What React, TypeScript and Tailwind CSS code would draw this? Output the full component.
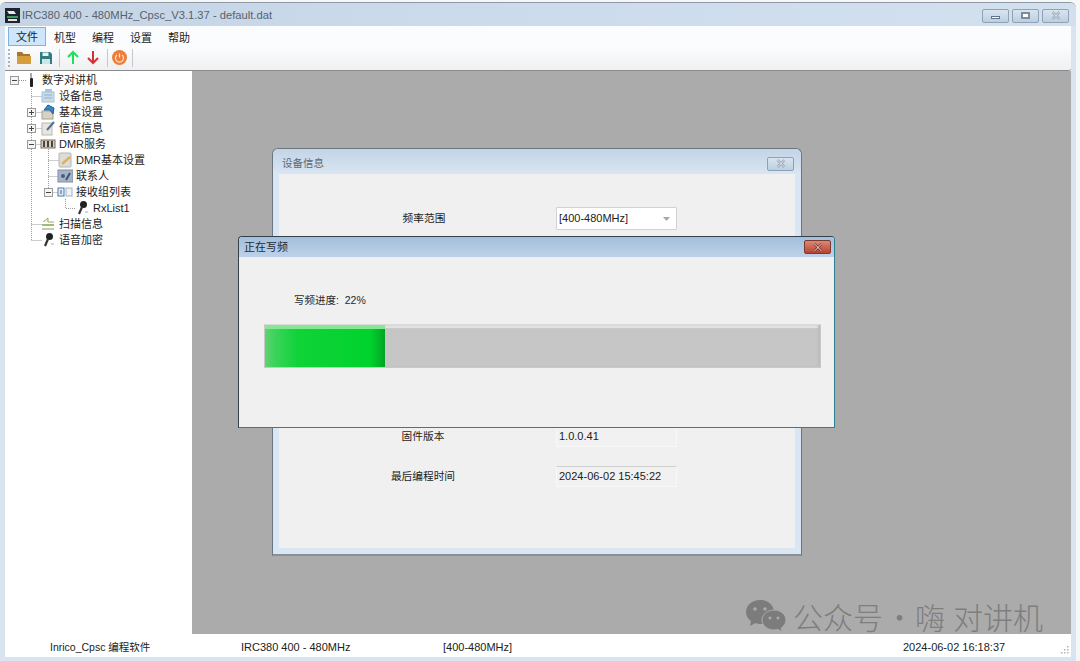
import type { ReactNode } from "react";

const font = "font-['Liberation_Sans','Noto_Sans_CJK_SC',sans-serif]";

function CloseGlyph({ color = "#8a97a3" }: { color?: string }) {
  return (
    <svg width="12" height="9" viewBox="0 0 12 9">
      <path d="M2.5 1 L9.5 8 M9.5 1 L2.5 8" stroke={color} strokeWidth="2.4" />
      <path d="M2.5 1 L9.5 8 M9.5 1 L2.5 8" stroke="#fff" strokeWidth="0.9" />
    </svg>
  );
}

function CaptionButton({ children, width = "w-[27px]" }: { children: ReactNode; width?: string }) {
  return (
    <div className={`${width} h-[14px] flex items-center justify-center rounded-[2px] border border-[#8ea2b5] bg-gradient-to-b from-[#d9e5f0] to-[#bccfe0]`}>
      {children}
    </div>
  );
}

function Expander({ open }: { open: boolean }) {
  return (
    <svg width="9" height="9" viewBox="0 0 9 9" className="shrink-0">
      <rect x="0.5" y="0.5" width="8" height="8" fill="#f4f4f4" stroke="#9a9a9a" />
      <path d={open ? "M2 4.5H7" : "M2 4.5H7M4.5 2V7"} stroke="#444" />
    </svg>
  );
}

const icons: Record<string, ReactNode> = {
  radio: (
    <>
      <rect x="7" y="6" width="3" height="9" rx="1" fill="#222" />
      <path d="M8 6V1" stroke="#555" strokeWidth="1" />
    </>
  ),
  info: (
    <>
      <path d="M5 1H12V4H5Z" fill="#a9c6de" />
      <rect x="2" y="4" width="12" height="10" fill="#c9dbe9" stroke="#a8c2d8" />
      <path d="M4 7H12M4 10H12" stroke="#8fb0cc" />
    </>
  ),
  base: (
    <>
      <rect x="2" y="7" width="11" height="8" fill="#d6d3c4" stroke="#a5a494" />
      <path d="M4 6L8 1L14 4L13 10L10 6Z" fill="#3c86c6" stroke="#1d5c96" />
    </>
  ),
  channel: (
    <>
      <rect x="2" y="3" width="10" height="12" fill="#e6e6e0" stroke="#b8b8b0" />
      <path d="M7 10L14 2" stroke="#5b6f8a" strokeWidth="2" />
    </>
  ),
  dmr: (
    <>
      <rect x="1" y="4" width="14" height="8" fill="#d8cfc0" stroke="#7a6a5c" />
      <path d="M4 5V11M8 5V11M12 5V11" stroke="#222" strokeWidth="1.6" />
    </>
  ),
  dmrset: (
    <>
      <rect x="2" y="1" width="12" height="14" rx="1" fill="#dcdcd8" stroke="#b4b4b0" />
      <path d="M5 12L13 5" stroke="#e0b060" strokeWidth="2.4" />
    </>
  ),
  contact: (
    <>
      <rect x="1" y="2" width="15" height="12" fill="#a5b5c9" stroke="#808ea2" />
      <circle cx="6" cy="8" r="2" fill="#4c5c78" />
      <path d="M9 12L13 5" stroke="#3f5070" strokeWidth="2" />
    </>
  ),
  rxgroup: (
    <>
      <rect x="1" y="4" width="6" height="8" fill="#e6eef6" stroke="#4a78ad" />
      <rect x="9" y="4" width="6" height="8" fill="#eef2f6" stroke="#a0b4c8" />
      <path d="M3 7H5M3 9H5" stroke="#28508a" />
    </>
  ),
  mic: (
    <>
      <circle cx="9.5" cy="4.5" r="3.5" fill="#222" />
      <path d="M8 7L5 14" stroke="#333" strokeWidth="2.2" />
      <path d="M11 12L14 12" stroke="#aaa" />
    </>
  ),
  scan: (
    <>
      <path d="M3 6L8 2V6H14" fill="#f3f1c4" stroke="#a5a56a" />
      <path d="M2 9H14" stroke="#74a040" strokeWidth="1.4" />
      <path d="M2 13H14" stroke="#a5a56a" strokeWidth="1.2" />
    </>
  ),
};

type Node = { label: string; icon: string; indent: number; exp?: boolean; open?: boolean };

const tree: Node[] = [
  { label: "数字对讲机", icon: "radio", indent: 5, exp: true, open: true },
  { label: "设备信息", icon: "info", indent: 22 },
  { label: "基本设置", icon: "base", indent: 22, exp: true },
  { label: "信道信息", icon: "channel", indent: 22, exp: true },
  { label: "DMR服务", icon: "dmr", indent: 22, exp: true, open: true },
  { label: "DMR基本设置", icon: "dmrset", indent: 39 },
  { label: "联系人", icon: "contact", indent: 39 },
  { label: "接收组列表", icon: "rxgroup", indent: 39, exp: true, open: true },
  { label: "RxList1", icon: "mic", indent: 56 },
  { label: "扫描信息", icon: "scan", indent: 22 },
  { label: "语音加密", icon: "mic", indent: 22 },
];

function TreeRow({ node }: { node: Node }) {
  return (
    <div className="h-4 flex items-center" style={{ paddingLeft: node.indent }}>
      <div className="w-[9px] shrink-0 mr-[4px] flex items-center">
        {node.exp && <Expander open={!!node.open} />}
      </div>
      <svg width="16" height="16" viewBox="0 0 16 16" className="shrink-0 mr-[3px]">
        {icons[node.icon]}
      </svg>
      <span className="text-[11px] leading-4 text-[#1c1c1c] whitespace-nowrap">{node.label}</span>
    </div>
  );
}

function Field({ label, value, top }: { label: string; value: string; top: string }) {
  return (
    <div className={`absolute left-0 right-0 flex items-center ${top}`}>
      <div className="w-[288px] text-center text-[10.7px] text-[#1c1c1c]">{label}</div>
      <div className="ml-[-11px] w-[121px] h-[21px] pl-[2px] flex items-center border border-[#f8f8f8] border-t-[#cfcfcf] text-[11px] text-[#222] bg-[#f1f1f1]">
        {value}
      </div>
    </div>
  );
}

export default function App() {
  return (
    <div className={`${font} relative w-[1080px] h-[661px] overflow-hidden bg-[#f7f7f7]`}>
      <div className="w-[1076px] h-[659px] mt-[2px] rounded-t-[6px] border-t border-[#8d99a5] bg-[#d8e5f1] flex flex-col">
        {/* title bar */}
        <div className="h-[23px] shrink-0 flex items-center pt-[2px] pl-[5px] pr-[7px] rounded-t-[6px] bg-gradient-to-r from-[#c4d4e4] via-[#cddced] to-[#d2e0ee]">
          <svg width="15" height="15" viewBox="0 0 15 15" className="mr-[2px]">
            <rect width="15" height="15" fill="#1b2430" />
            <path d="M2 3H9L11 6H4Z" fill="#e8e8e8" />
            <rect x="2" y="8" width="11" height="2" fill="#3f9a5a" />
            <rect x="3" y="11" width="9" height="2" fill="#e0e0e0" />
          </svg>
          <span className="text-[11.2px] text-[#56626e] whitespace-nowrap">IRC380 400 - 480MHz_Cpsc_V3.1.37 - default.dat</span>
          <div className="ml-auto flex gap-[3px]">
            <CaptionButton>
              <div className="mt-[3px] w-[9px] h-[3px] bg-white border border-[#5f7488]" />
            </CaptionButton>
            <CaptionButton>
              <div className="w-[9px] h-[7px] bg-white border-2 border-[#7b8c9c]" />
            </CaptionButton>
            <CaptionButton>
              <CloseGlyph />
            </CaptionButton>
          </div>
        </div>

        <div className="flex-1 min-h-0 mx-[5px] mb-[4px] flex flex-col">
          {/* menu */}
          <div className="h-[21px] shrink-0 bg-[#fbfcfd] flex items-center pl-[3px] text-[11px] text-[#1c1c1c]">
            <div className="w-[38px] h-[19px] pt-[2px] flex items-center justify-center bg-[#cfe6fa] border border-[#7fb2e2]">文件</div>
            <div className="w-[38px] pt-[3px] text-center">机型</div>
            <div className="w-[38px] pt-[3px] text-center">编程</div>
            <div className="w-[38px] pt-[3px] text-center">设置</div>
            <div className="w-[38px] pt-[3px] text-center">帮助</div>
          </div>

          {/* toolbar */}
          <div className="h-[24px] shrink-0 flex items-center pb-[2px] pl-[3px] bg-gradient-to-b from-[#fbfcfd] to-[#eef0f2] border-b border-[#8b8b8b] rounded-br-[3px]">
            <div className="w-[2px] h-[18px] mr-[6px] border-l-2 border-dotted border-[#a9b4bf]" />
            <svg width="16" height="15" viewBox="0 0 16 15" className="mr-[7px]">
              <path d="M1 2H6L7.5 4H14V14H1Z" fill="#a8752a" />
              <path d="M1 6H15V14H1Z" fill="#d59d3c" />
            </svg>
            <svg width="14" height="14" viewBox="0 0 14 14" className="mr-[6px]">
              <path d="M1 1H11L13 3V13H1Z" fill="#2f7c82" />
              <rect x="3.5" y="1.5" width="6" height="3.5" fill="#e6f0f0" />
              <rect x="3" y="8" width="8" height="5" fill="#cfe4e4" />
            </svg>
            <div className="w-px h-[18px] mr-[6px] bg-[#c4c8cc]" />
            <svg width="14" height="15" viewBox="0 0 14 15" className="mr-[6px]">
              <path d="M7 14V2M2 7L7 2L12 7" stroke="#1fe05a" strokeWidth="2" fill="none" />
            </svg>
            <svg width="14" height="15" viewBox="0 0 14 15" className="mr-[7px]">
              <path d="M7 1V13M2 8L7 13L12 8" stroke="#d8302f" strokeWidth="2" fill="none" />
            </svg>
            <div className="w-px h-[18px] mr-[4px] bg-[#c4c8cc]" />
            <svg width="15" height="15" viewBox="0 0 15 15" className="mr-[5px]">
              <circle cx="7.5" cy="7.5" r="7.5" fill="#ee7d3a" />
              <path d="M5 5A4 4 0 1 0 10 5M7.5 3.5V7.5" stroke="#fde2cf" strokeWidth="1.2" fill="none" />
            </svg>
            <div className="w-px h-[18px] bg-[#c4c8cc]" />
          </div>

          {/* body */}
          <div className="flex-1 min-h-0 flex">
            <div className="relative w-[187px] shrink-0 bg-white pt-[1px]">
              <svg width="100" height="176" className="absolute left-0 top-0" fill="none" stroke="#9c9c9c" strokeDasharray="1 1">
                <path d="M14 9.500H22" />
                <path d="M26.500 18V169.500" />
                <path d="M26.500 25.500H37M26.500 41.500H37M26.500 57.500H37M26.500 73.500H37M26.500 153.500H37M26.500 169.500H37" />
                <path d="M43.500 78V121.500M43.500 89.500H54M43.500 105.500H54M43.500 121.500H54" />
                <path d="M60.500 128V137.500H71" />
              </svg>
              <div className="relative">
                {tree.map((n) => (
                  <TreeRow key={n.label} node={n} />
                ))}
              </div>
            </div>
            <div className="flex-1 bg-[#ababab]" />
          </div>

          {/* status bar */}
          <div className="h-[23px] shrink-0 pt-[4px] bg-white flex items-center text-[11px] text-[#222] whitespace-nowrap">
            <div className="w-[236px] pl-[45px] text-[10.5px]">Inrico_Cpsc 编程软件</div>
            <div className="w-[202px]">IRC380 400 - 480MHz</div>
            <div className="w-[460px]">[400-480MHz]</div>
            <div>2024-06-02 16:18:37</div>
            <svg width="10" height="10" viewBox="0 0 10 10" className="ml-auto mr-[1px] self-end mb-[2px]" fill="#b4b4b4">
              <rect x="7" y="1" width="1.5" height="1.5" />
              <rect x="4" y="4" width="1.5" height="1.5" />
              <rect x="7" y="4" width="1.5" height="1.5" />
              <rect x="1" y="7" width="1.5" height="1.5" />
              <rect x="4" y="7" width="1.5" height="1.5" />
              <rect x="7" y="7" width="1.5" height="1.5" />
            </svg>
          </div>
        </div>
      </div>

      {/* device info child window */}
      <div className="absolute left-[272px] top-[148px] w-[530px] h-[408px] rounded-t-[6px] border border-[#6c7680] border-b-2 border-b-[#8a8f96] bg-[#d9e6f3] flex flex-col">
        <div className="h-[25px] shrink-0 flex items-center pt-[4px] pl-[9px] pr-[7px] rounded-t-[6px] bg-gradient-to-b from-[#c3d4e5] to-[#d9e6f3]">
          <span className="text-[10.5px] text-[#5c6772]">设备信息</span>
          <div className="ml-auto">
            <CaptionButton>
              <CloseGlyph />
            </CaptionButton>
          </div>
        </div>
        <div className="relative flex-1 mx-[6px] mb-[6px] bg-[#f0f0f0]">
          <div className="absolute left-0 right-0 top-[33px] flex items-center">
            <div className="w-[290px] text-center text-[10.7px] text-[#1c1c1c]">频率范围</div>
            <div className="ml-[-13px] w-[121px] h-[23px] pl-[2px] pr-[6px] flex items-center justify-between bg-white border border-[#d2d2d2] rounded-[1px] text-[11px] text-[#222]">
              [400-480MHz]
              <svg width="7" height="4" viewBox="0 0 7 4">
                <path d="M0 0H7L3.500 4Z" fill="#a8a8a8" />
              </svg>
            </div>
          </div>
          <Field label="固件版本" value="1.0.0.41" top="top-[252px]" />
          <Field label="最后编程时间" value="2024-06-02 15:45:22" top="top-[292px]" />
        </div>
      </div>

      {/* progress dialog */}
      <div className="absolute left-[238px] top-[236px] w-[597px] h-[192px] rounded-t-[4px] border border-[#33414d] border-r-[#2f7f93] border-b-[#2f7f93] bg-[#f0f0f0] flex flex-col">
        <div className="h-[20px] shrink-0 flex items-center pl-[5px] pr-[3px] rounded-t-[4px] bg-gradient-to-b from-[#a4bfdb] to-[#bdd2e8]">
          <span className="text-[11px] text-[#1c2a36]">正在写频</span>
          <div className="ml-auto w-[27px] h-[14px] flex items-center justify-center rounded-[2px] border border-[#7a3a30] bg-gradient-to-b from-[#d98a78] to-[#bb4030]">
            <CloseGlyph color="#7a2a20" />
          </div>
        </div>
        <div className="flex-1 pl-[25px] pr-[13px] pt-[36px]">
          <div className="ml-[30px] text-[10.5px] leading-[14px] text-[#2a2a2a]">写频进度:&nbsp;&nbsp;22%</div>
          <div className="mt-[17px] h-[44px] flex border border-[#c9c9c9] border-t-[#dcdcdc] bg-[#c6c6c6] shadow-[inset_-2px_0_2px_#bcbcbc,inset_0_3px_1px_#e4e4e4]">
            <div className="w-[120px] h-full bg-[linear-gradient(90deg,#62d274,#3cd35c_8%,#10d338_27%,#00d22c_88%,#03a525)] border-t-[4px] border-t-[#86e892]" />
          </div>
        </div>
      </div>

      {/* watermark */}
      <div className="absolute left-[745px] top-[598px] flex items-center text-[#7e7e7e]">
        <svg width="42" height="36" viewBox="0 0 42 36" className="mr-[6px]">
          <path d="M15 2C7 2 1 7.500 1 14C1 18 3 21 6 23L5 28L10.500 25C12 25.600 14 26 16 26C23 26 29 20.500 29 14C29 7.500 23 2 15 2Z" fill="#7c7c7c" />
          <circle cx="10" cy="11" r="1.800" fill="#ababab" />
          <circle cx="20" cy="11" r="1.800" fill="#ababab" />
          <path d="M29 12C22.500 12 17 16.500 17 22C17 27.500 22.500 32 29 32C30.500 32 31.800 31.800 33 31.300L37 34L36.200 30C39 28 41 25.200 41 22C41 16.500 35.500 12 29 12Z" fill="#7c7c7c" stroke="#ababab" />
          <circle cx="25" cy="20" r="1.500" fill="#ababab" />
          <circle cx="33" cy="20" r="1.500" fill="#ababab" />
        </svg>
        <div className="flex text-[30px] leading-[36px] whitespace-nowrap font-['Noto_Sans_CJK_SC',sans-serif] font-light">
          <span>公众号</span>
          <span className="w-[33px] text-center">·</span>
          <span className="ml-[-1px]">嗨</span>
          <span className="ml-[8px]">对讲机</span>
        </div>
      </div>
    </div>
  );
}
